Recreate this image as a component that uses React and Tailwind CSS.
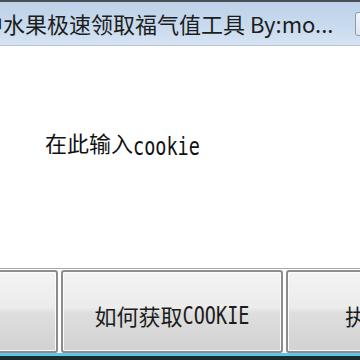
import React from 'react'

const cjk = { fontFamily: '"Noto Sans CJK SC", "Noto Sans", sans-serif' }

function Mono({ children }) {
  return (
    <span className="inline-block leading-none scale-y-[1.35] translate-y-[3px] origin-[50%_78%] text-[18.5px] font-['DejaVu_Sans_Mono','Liberation_Mono',monospace]">
      {children}
    </span>
  )
}

function Btn({ children, className = '' }) {
  return (
    <div
      className={`w-[222px] h-[83px] shrink-0 rounded-[3px] border-2 border-[#8c8c8c] shadow-[inset_0_0_0_1px_#fbfbfb] bg-[linear-gradient(#f3f3f3_0%,#ececec_45%,#dedede_52%,#d2d2d2_100%)] flex items-center justify-center pt-[8px] text-[22px] text-[#1c1c1c] whitespace-nowrap ${className}`}
    >
      {children}
    </div>
  )
}

export default function App() {
  return (
    <div
      className="w-[360px] h-[360px] overflow-hidden flex flex-col bg-white font-['Noto_Sans_CJK_SC','Noto_Sans',sans-serif]"
    >
      {/* title bar */}
      <div className="h-[46px] shrink-0 border-t-2 border-[#4b4f55] border-b border-b-[#b4c6da] bg-[linear-gradient(#bdd1e8,#c9dbee_60%,#d7e4f2)] flex items-center overflow-hidden">
        <div className="flex-1 min-w-0 overflow-hidden whitespace-nowrap">
          <span className="inline-block -ml-[19px] text-[22px] leading-[26px] text-[#1d1d1d]" style={cjk}>
            中水果极速领取福气值工具 By:mo...
          </span>
        </div>
        <div className="w-[26px] h-[24px] -mr-[21px] ml-[17px] shrink-0 rounded-[3px] border border-[#8f9aa6] bg-[linear-gradient(#f4f7fa,#dde5ee)]" />
      </div>

      {/* content */}
      <div className="h-[222px] shrink-0 pl-[45px] pt-[84px]">
        <div className="leading-[24px] text-[22px] text-[#111] whitespace-nowrap">
          在此输入<Mono>cookie</Mono>
        </div>
      </div>

      {/* buttons */}
      <div className="shrink-0 border-t border-[#a9a9a9] pt-[1px] overflow-hidden">
        <div className="flex gap-[3px] -ml-[164px]">
          <Btn>开始领取</Btn>
          <Btn>如何获取<Mono>COOKIE</Mono></Btn>
          <Btn className="pr-4">执行领取</Btn>
        </div>
      </div>
      <div className="h-[3px] shrink-0 bg-[#5fc6e6]" />
      <div className="flex-1 bg-[#1e2a30]" />
    </div>
  )
}
